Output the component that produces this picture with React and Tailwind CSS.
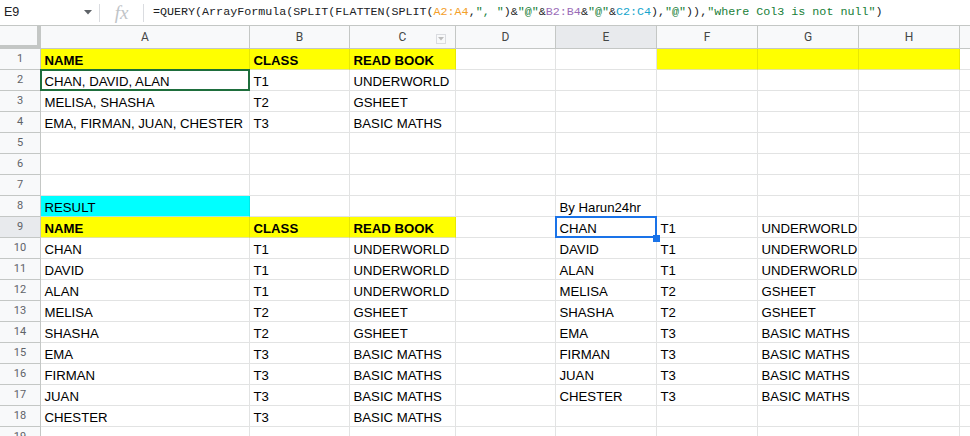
import React from 'react';

const COLS = [
  { k: 'A', w: 'w-[209px]' },
  { k: 'B', w: 'w-[100px]' },
  { k: 'C', w: 'w-[106px]' },
  { k: 'D', w: 'w-[100px]' },
  { k: 'E', w: 'w-[101px]' },
  { k: 'F', w: 'w-[101px]' },
  { k: 'G', w: 'w-[101px]' },
  { k: 'H', w: 'w-[101px]' },
];

const source = [
  ['CHAN, DAVID, ALAN', 'T1', 'UNDERWORLD'],
  ['MELISA, SHASHA', 'T2', 'GSHEET'],
  ['EMA, FIRMAN, JUAN, CHESTER', 'T3', 'BASIC MATHS'],
];

const result = [
  ['CHAN', 'T1', 'UNDERWORLD'],
  ['DAVID', 'T1', 'UNDERWORLD'],
  ['ALAN', 'T1', 'UNDERWORLD'],
  ['MELISA', 'T2', 'GSHEET'],
  ['SHASHA', 'T2', 'GSHEET'],
  ['EMA', 'T3', 'BASIC MATHS'],
  ['FIRMAN', 'T3', 'BASIC MATHS'],
  ['JUAN', 'T3', 'BASIC MATHS'],
  ['CHESTER', 'T3', 'BASIC MATHS'],
];

// build the cell map: rows[n][col] = { t, bold, fill }
const buildRows = () => {
  const rows = {};
  for (let r = 1; r <= 19; r++) rows[r] = {};
  const head = (r, cols) => {
    rows[r][cols[0]] = { t: 'NAME', bold: true, fill: 'y' };
    rows[r][cols[1]] = { t: 'CLASS', bold: true, fill: 'y' };
    rows[r][cols[2]] = { t: 'READ BOOK', bold: true, fill: 'y' };
  };
  head(1, ['A', 'B', 'C']);
  ['F', 'G', 'H'].forEach(c => { rows[1][c] = { t: '', fill: 'y' }; });
  source.forEach((s, i) => {
    rows[i + 2].A = { t: s[0] };
    rows[i + 2].B = { t: s[1] };
    rows[i + 2].C = { t: s[2] };
  });
  rows[8].A = { t: 'RESULT', fill: 'c' };
  rows[8].E = { t: 'By Harun24hr' };
  head(9, ['A', 'B', 'C']);
  result.forEach((s, i) => {
    rows[i + 10].A = { t: s[0] };
    rows[i + 10].B = { t: s[1] };
    rows[i + 10].C = { t: s[2] };
    rows[i + 9].E = { t: s[0] };
    rows[i + 9].F = { t: s[1] };
    rows[i + 9].G = { t: s[2] };
  });
  return rows;
};

const ROWS = buildRows();

const FormulaText = () => {
  const g = 'text-[#188038]';
  return (
    <span className="whitespace-pre text-[#202124]">
      =QUERY(ArrayFormula(SPLIT(FLATTEN(SPLIT(
      <span className="text-[#f4a028]">A2:A4</span>,<span className={g}>", "</span>)&amp;<span className={g}>"@"</span>&amp;
      <span className="text-[#9a6cb8]">B2:B4</span>&amp;<span className={g}>"@"</span>&amp;
      <span className="text-[#16a5cd]">C2:C4</span>),<span className={g}>"@"</span>)),<span className={g}>"where Col3 is not null"</span>)
    </span>
  );
};

const Cell = ({ col, row }) => {
  const c = ROWS[row][col.k];
  let bg = 'bg-white border-[#e2e3e3]';
  if (c && c.fill === 'y') bg = 'bg-[#ffff00] border-r-[#e8e800] border-b-[#e2e3a0]';
  if (c && c.fill === 'c') bg = 'bg-[#00ffff] border-r-[#00e8e8] border-b-[#a8e3e3]';
  const greenSel = row === 2 && col.k === 'A';
  const blueSel = row === 9 && col.k === 'E';
  return (
    <div className={`relative shrink-0 h-full ${col.w} border-r border-b ${bg} flex items-end pl-[3.5px] pr-[2px] pb-px overflow-visible`}>
      {c && c.t && (
        <span className={`whitespace-nowrap leading-[15px] text-[13.2px] text-black ${c.bold ? 'font-bold' : ''}`}>{c.t}</span>
      )}
      {greenSel && <div className="absolute -inset-px border-2 border-[#1e6e3c] z-10" />}
      {blueSel && (
        <>
          <div className="absolute -inset-px border-2 border-[#1a73e8] z-10" />
          <div className="absolute -right-[4px] -bottom-[5px] w-[7px] h-[7px] bg-[#1a73e8] z-20" />
        </>
      )}
    </div>
  );
};

export default function App() {
  const rowNums = Array.from({ length: 19 }, (_, i) => i + 1);
  return (
    <div className="w-[970px] h-[436px] overflow-hidden bg-white font-['Liberation_Sans',Arial,sans-serif]">
      {/* formula bar */}
      <div className="h-[26px] flex items-center border-b border-[#c4c7c5] bg-white">
        <div className="w-[99px] h-full flex items-center justify-between pl-[4px] pr-[7px]">
          <span className="text-[12.5px] text-[#202124]">E9</span>
          <svg width="8" height="5" viewBox="0 0 8 5"><path d="M0 0h8L4 4.5z" fill="#5f6368" /></svg>
        </div>
        <div className="w-px h-[18px] bg-[#dadce0]" />
        <div className="w-[43px] h-full flex items-center justify-center">
          <span className="font-['Liberation_Serif',serif] italic text-[19px] text-[#c0c4c8] leading-none">fx</span>
        </div>
        <div className="w-px h-[18px] bg-[#dadce0]" />
        <div className="pl-[9px] font-['Liberation_Mono',monospace] text-[11.7px] leading-none">
          <FormulaText />
        </div>
      </div>

      {/* column headers */}
      <div className="h-[23px] flex bg-[#f8f9fa]">
        <div className="w-[41px] shrink-0 h-full border-r-[4px] border-b-[4px] border-[#c4c7c5] bg-[#f8f9fa]" />
        {COLS.map(col => (
          <div
            key={col.k}
            className={`relative shrink-0 ${col.w} h-full border-r border-b border-[#c4c7c5] flex items-center justify-center font-['Roboto',sans-serif] text-[12px] text-[#444746] ${col.k === 'E' ? 'bg-[#e8eaed]' : 'bg-[#f8f9fa]'}`}
          >
            {col.k}
            {col.k === 'C' && (
              <div className="absolute right-[9px] top-[8px] w-[10px] h-[10px] border border-[#dadce0] bg-[#f8f9fa] flex items-center justify-center">
                <svg width="6" height="4" viewBox="0 0 6 4"><path d="M0 0h6L3 3.5z" fill="#bdbdbd" /></svg>
              </div>
            )}
          </div>
        ))}
        <div className="flex-1 h-full border-b border-[#c4c7c5]" />
      </div>

      {/* grid */}
      {rowNums.map(r => (
        <div key={r} className="h-[21px] flex">
          <div className={`w-[41px] shrink-0 h-full border-r border-b border-[#c4c7c5] flex items-center justify-center font-['Roboto',sans-serif] text-[11px] text-[#5f6368] ${r === 9 ? 'bg-[#e8eaed]' : 'bg-[#f8f9fa]'}`}>
            {r}
          </div>
          {COLS.map(col => <Cell key={col.k} col={col} row={r} />)}
          <div className="flex-1 h-full border-b border-[#e2e3e3]" />
        </div>
      ))}
    </div>
  );
}
